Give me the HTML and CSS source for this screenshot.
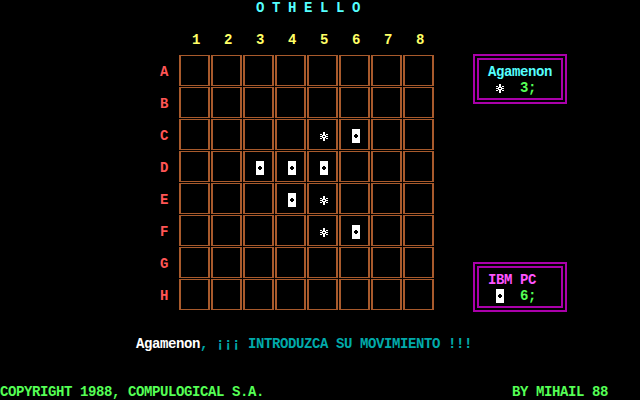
FILE: index.html
```html
<!DOCTYPE html>
<html>
<head>
<meta charset="utf-8">
<title>Othello</title>
<link rel="stylesheet" href="styles.css">
</head>
<body>
<svg class="defs" width="0" height="0" aria-hidden="true">
  <defs>
    <symbol id="star" viewBox="0 0 8 14">
      <path fill="#fff" d="M3 3h2v2H3z M0 5h2v1H0z M3 5h2v1H3z M6 5h2v1H6z M2 6h4v1H2z M0 7h3v1H0z M5 7h3v1H5z M2 8h4v1H2z M0 9h2v1H0z M3 9h2v1H3z M6 9h2v1H6z M3 10h2v2H3z"/>
    </symbol>
    <symbol id="disc" viewBox="0 0 8 14">
      <path fill="#fff" d="M0 0h8v14H0z"/>
      <path fill="#000" d="M3 5h2v1H3z M2 6h4v2H2z M3 8h2v1H3z"/>
    </symbol>
  </defs>
</svg>
<div class="screen">
  <div class="title">O T H E L L O</div>
  <div class="cols"><span>1</span><span>2</span><span>3</span><span>4</span><span>5</span><span>6</span><span>7</span><span>8</span></div>
  <div class="main">
    <div class="board">
      <div class="lbl">A</div><div class="cell"></div><div class="cell"></div><div class="cell"></div><div class="cell"></div><div class="cell"></div><div class="cell"></div><div class="cell"></div><div class="cell"></div>
      <div class="lbl">B</div><div class="cell"></div><div class="cell"></div><div class="cell"></div><div class="cell"></div><div class="cell"></div><div class="cell"></div><div class="cell"></div><div class="cell"></div>
      <div class="lbl">C</div><div class="cell"></div><div class="cell"></div><div class="cell"></div><div class="cell"></div><div class="cell"><svg class="pc" preserveAspectRatio="none"><use href="#star"/></svg></div><div class="cell"><svg class="pc" preserveAspectRatio="none"><use href="#disc"/></svg></div><div class="cell"></div><div class="cell"></div>
      <div class="lbl">D</div><div class="cell"></div><div class="cell"></div><div class="cell"><svg class="pc" preserveAspectRatio="none"><use href="#disc"/></svg></div><div class="cell"><svg class="pc" preserveAspectRatio="none"><use href="#disc"/></svg></div><div class="cell"><svg class="pc" preserveAspectRatio="none"><use href="#disc"/></svg></div><div class="cell"></div><div class="cell"></div><div class="cell"></div>
      <div class="lbl">E</div><div class="cell"></div><div class="cell"></div><div class="cell"></div><div class="cell"><svg class="pc" preserveAspectRatio="none"><use href="#disc"/></svg></div><div class="cell"><svg class="pc" preserveAspectRatio="none"><use href="#star"/></svg></div><div class="cell"></div><div class="cell"></div><div class="cell"></div>
      <div class="lbl">F</div><div class="cell"></div><div class="cell"></div><div class="cell"></div><div class="cell"></div><div class="cell"><svg class="pc" preserveAspectRatio="none"><use href="#star"/></svg></div><div class="cell"><svg class="pc" preserveAspectRatio="none"><use href="#disc"/></svg></div><div class="cell"></div><div class="cell"></div>
      <div class="lbl">G</div><div class="cell"></div><div class="cell"></div><div class="cell"></div><div class="cell"></div><div class="cell"></div><div class="cell"></div><div class="cell"></div><div class="cell"></div>
      <div class="lbl">H</div><div class="cell"></div><div class="cell"></div><div class="cell"></div><div class="cell"></div><div class="cell"></div><div class="cell"></div><div class="cell"></div><div class="cell"></div>
    </div>
    <div class="side">
      <div class="panel">
        <div class="panel-in">
          <div class="name-a">Agamenon</div>
          <div class="score"><span class="gap"></span><svg class="pc" preserveAspectRatio="none"><use href="#star"/></svg><span class="num">  3;</span></div>
        </div>
      </div>
      <div class="panel panel-pc">
        <div class="panel-in">
          <div class="name-pc">IBM PC</div>
          <div class="score"><span class="gap"></span><svg class="pc" preserveAspectRatio="none"><use href="#disc"/></svg><span class="num">  6;</span></div>
        </div>
      </div>
    </div>
  </div>
  <div class="msg"><span class="who">Agamenon</span><span class="prompt">, ¡¡¡ INTRODUZCA SU MOVIMIENTO !!!</span></div>
  <div class="footer"><span>COPYRIGHT 1988, COMPULOGICAL S.A.</span><span>BY MIHAIL 88</span></div>
</div>
</body>
</html>
```
FILE: styles.css
```css
html, body {
  margin: 0;
  padding: 0;
  background: #000;
}
.defs {
  position: absolute;
  width: 0;
  height: 0;
}
.screen {
  width: 640px;
  height: 400px;
  overflow: hidden;
  background: #000;
  font-family: "Liberation Mono", "DejaVu Sans Mono", monospace;
  font-size: 14px;
  font-weight: bold;
  letter-spacing: -0.4px;
  line-height: 16px;
}
.title,
.name-a,
.name-pc,
.num,
.msg span,
.footer span {
  white-space: pre;
}
.title {
  height: 16px;
  padding-left: 256px;
  color: #55ffff;
}
.cols {
  display: flex;
  height: 16px;
  margin-top: 16px;
  padding-left: 192px;
  color: #ffff66;
}
.cols span {
  width: 32px;
}
.main {
  display: flex;
  align-items: flex-start;
  height: 264px;
}
.board {
  display: grid;
  grid-template-columns: 18px repeat(8, 31px);
  grid-auto-rows: 31px;
  gap: 1px;
  margin-left: 160px;
  margin-top: 7px;
}
.lbl {
  padding-top: 9px;
  color: #ff5555;
}
.cell {
  box-sizing: border-box;
  border-style: solid;
  border-color: #a85a2c;
  border-width: 1px 2px;
  padding: 8px 0 0 11px;
}
.pc {
  display: block;
  width: 8px;
  height: 16px;
  shape-rendering: crispEdges;
}
.score .pc {
  display: inline-block;
  vertical-align: top;
}
.side {
  margin-left: 39px;
  margin-top: 6px;
}
.panel {
  box-sizing: border-box;
  width: 94px;
  height: 50px;
  border: 2px solid #aa00aa;
  padding: 2px;
}
.panel + .panel {
  margin-top: 158px;
}
.panel-in {
  box-sizing: border-box;
  height: 42px;
  border: 2px solid #aa00aa;
  padding: 4px 0 0 9px;
}
.name-a {
  color: #55ffff;
}
.name-pc {
  color: #ff55ff;
}
.score {
  display: flex;
  height: 16px;
}
.gap {
  display: inline-block;
  width: 8px;
}
.num {
  color: #55ff55;
}
.msg {
  display: flex;
  margin-top: 24px;
  padding-left: 136px;
  height: 16px;
}
.who {
  color: #ffffff;
}
.prompt {
  color: #00aaaa;
}
.footer {
  display: flex;
  justify-content: space-between;
  margin-top: 32px;
  padding-right: 32px;
  height: 16px;
  color: #55ff55;
}
```
